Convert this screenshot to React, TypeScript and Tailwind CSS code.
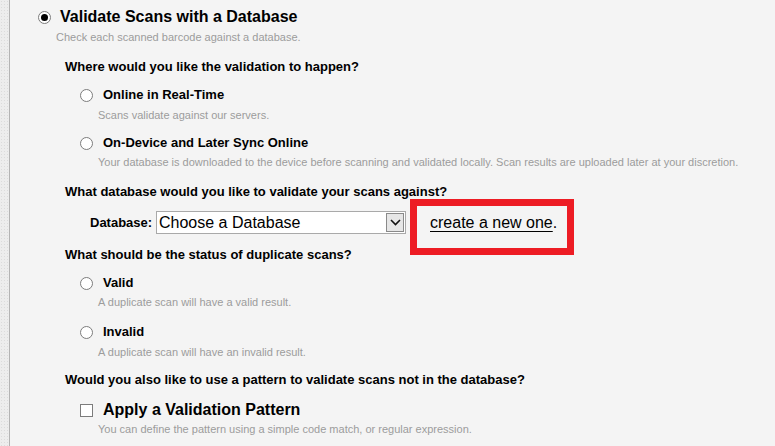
const Radio = ({ checked = false }: { checked?: boolean }) => (
  <span className="flex h-[13px] w-[13px] shrink-0 items-center justify-center rounded-full border border-[#7c7c7c] bg-white">
    {checked && <span className="h-[7px] w-[7px] rounded-full bg-black" />}
  </span>
);

const Option = ({ label, desc, top, descTop }: { label: string; desc: string; top: string; descTop: string }) => (
  <div className={top}>
    <div className="flex items-center gap-[10px] pl-[80px]">
      <Radio />
      <span className="text-[13px] font-bold leading-[16px] text-black">{label}</span>
    </div>
    <p className={`${descTop} pl-[98px] text-[11px] leading-[14px] text-[#9c9c9c]`}>{desc}</p>
  </div>
);

export default function App() {
  return (
    <div
      className="flex h-[446px] w-full overflow-hidden bg-[#f4f4f4]"
      style={{ fontFamily: '"Liberation Sans", Arial, sans-serif' }}
    >
      <div className="w-[10px] shrink-0 border-r border-[#b4b4b4] bg-[#ededed] bg-[radial-gradient(#dcdcdc_0.6px,transparent_0.8px)] bg-[length:3px_3px]" />

      <div className="flex-1 -ml-[10px]">
        <div className="mt-[7px] flex items-center gap-[9px] pl-[38px]">
          <Radio checked />
          <h1 className="text-[16px] font-bold leading-[20px] text-black">Validate Scans with a Database</h1>
        </div>
        <p className="mt-[3px] pl-[56px] text-[11px] leading-[14px] text-[#9c9c9c]">
          Check each scanned barcode against a database.
        </p>

        <h2 className="mt-[15px] pl-[65px] text-[13px] font-bold leading-[16px] text-black">
          Where would you like the validation to happen?
        </h2>
        <Option
          top="mt-[12px]"
          descTop="mt-[5px]"
          label="Online in Real-Time"
          desc="Scans validate against our servers."
        />
        <Option
          top="mt-[13px]"
          descTop="mt-[4px]"
          label="On-Device and Later Sync Online"
          desc="Your database is downloaded to the device before scanning and validated locally. Scan results are uploaded later at your discretion."
        />

        <h2 className="mt-[15px] pl-[65px] text-[13px] font-bold leading-[16px] text-black">
          What database would you like to validate your scans against?
        </h2>
        <div className="mt-[11px] flex items-center pl-[90px]">
          <span className="w-[66px] text-[13px] font-bold leading-[16px] text-black">Database:</span>
          <div className="flex h-[23px] w-[250px] items-center justify-between border border-[#a9a9a9] bg-white pl-[2px] pr-[1px]">
            <span className="text-[16px] leading-[20px] text-black">Choose a Database</span>
            <span className="flex h-[19px] w-[18px] items-center justify-center border border-[#8a8a8a] bg-[#e6e6e6]">
              <svg width="11" height="7" viewBox="0 0 11 7">
                <path d="M1 1l4.5 4.5L10 1" fill="none" stroke="#111" strokeWidth="1.6" />
              </svg>
            </span>
          </div>
          <span className="relative ml-[24px] text-[16px] leading-[20px] text-black">
            <span className="underline decoration-1 underline-offset-[3px]">create a new one</span>.
            <span className="absolute -left-[20px] -top-[14px] h-[56px] w-[164px] border-[7px] border-[#ed1c24]" />
          </span>
        </div>

        <h2 className="mt-[13px] pl-[65px] text-[13px] font-bold leading-[16px] text-black">
          What should be the status of duplicate scans?
        </h2>
        <Option
          top="mt-[12px]"
          descTop="mt-[4px]"
          label="Valid"
          desc="A duplicate scan will have a valid result."
        />
        <Option
          top="mt-[15px]"
          descTop="mt-[5px]"
          label="Invalid"
          desc="A duplicate scan will have an invalid result."
        />

        <h2 className="mt-[13px] pl-[65px] text-[13px] font-bold leading-[16px] text-black">
          Would you also like to use a pattern to validate scans not in the database?
        </h2>
        <div className="mt-[12px] flex items-center gap-[10px] pl-[80px]">
          <span className="h-[13px] w-[13px] shrink-0 border border-[#7c7c7c] bg-white" />
          <span className="text-[16px] font-bold leading-[20px] text-black">Apply a Validation Pattern</span>
        </div>
        <p className="mt-[2px] pl-[98px] text-[11px] leading-[14px] text-[#9c9c9c]">
          You can define the pattern using a simple code match, or regular expression.
        </p>
      </div>
    </div>
  );
}
